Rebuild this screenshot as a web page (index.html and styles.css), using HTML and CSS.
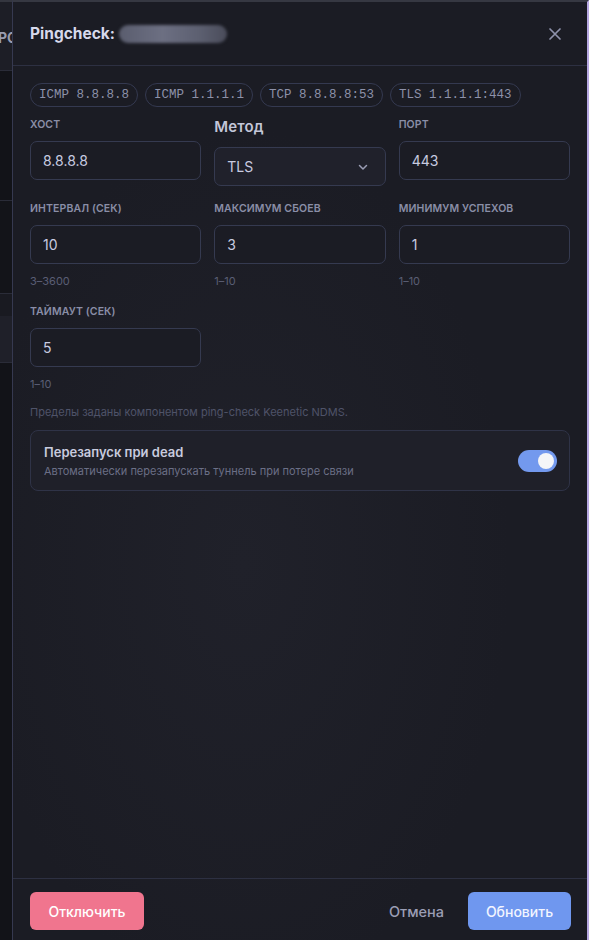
FILE: index.html
```html
<!DOCTYPE html>
<html lang="ru">
<head>
    <meta charset="UTF-8">
    <meta name="viewport" content="width=device-width, initial-scale=1.0">
    <title>Pingcheck</title>
    <link rel="stylesheet" href="styles.css">
</head>
<body>
    <div class="backdrop">
        <div class="bg-row bg-head"><span class="bg-text">PO</span></div>
        <div class="bg-row bg-dark"></div>
        <div class="bg-row bg-dark2"></div>
        <div class="bg-row bg-mid"></div>
        <div class="bg-row bg-light"></div>
        <div class="bg-row bg-rest"></div>
    </div>

    <div class="modal">
        <div class="modal-head">
            <h2 class="modal-title">Pingcheck: <span class="blurred"></span></h2>
            <button class="close" type="button" aria-label="Закрыть">
                <svg width="14" height="14" viewBox="0 0 14 14"><path d="M2 2L12 12M12 2L2 12" stroke="currentColor" stroke-width="1.7" stroke-linecap="round"/></svg>
            </button>
        </div>

        <div class="modal-body">
            <div class="presets">
                <span class="chip">ICMP 8.8.8.8</span>
                <span class="chip">ICMP 1.1.1.1</span>
                <span class="chip">TCP 8.8.8.8:53</span>
                <span class="chip">TLS 1.1.1.1:443</span>
            </div>

            <div class="fields">
                <div class="field">
                    <label class="label">Хост</label>
                    <div class="input">8.8.8.8</div>
                </div>
                <div class="field">
                    <label class="label label-big">Метод</label>
                    <div class="input select">
                        TLS
                        <svg width="12" height="12" viewBox="0 0 12 12"><path d="M2.5 4.5L6 8L9.5 4.5" fill="none" stroke="currentColor" stroke-width="1.5" stroke-linecap="round" stroke-linejoin="round"/></svg>
                    </div>
                </div>
                <div class="field">
                    <label class="label">Порт</label>
                    <div class="input">443</div>
                </div>

                <div class="field">
                    <label class="label">Интервал (сек)</label>
                    <div class="input">10</div>
                    <div class="hint">3–3600</div>
                </div>
                <div class="field">
                    <label class="label">Максимум сбоев</label>
                    <div class="input">3</div>
                    <div class="hint">1–10</div>
                </div>
                <div class="field">
                    <label class="label">Минимум успехов</label>
                    <div class="input">1</div>
                    <div class="hint">1–10</div>
                </div>

                <div class="field">
                    <label class="label">Таймаут (сек)</label>
                    <div class="input">5</div>
                    <div class="hint">1–10</div>
                </div>
            </div>

            <p class="note">Пределы заданы компонентом ping-check Keenetic NDMS.</p>

            <div class="toggle-card">
                <div>
                    <div class="toggle-title">Перезапуск при dead</div>
                    <div class="toggle-sub">Автоматически перезапускать туннель при потере связи</div>
                </div>
                <span class="switch on"><span class="knob"></span></span>
            </div>
        </div>

        <div class="modal-foot">
            <button class="btn btn-danger" type="button">Отключить</button>
            <div class="foot-right">
                <button class="btn btn-ghost" type="button">Отмена</button>
                <button class="btn btn-primary" type="button">Обновить</button>
            </div>
        </div>
    </div>
</body>
</html>
```

FILE: styles.css
```css
* {
    box-sizing: border-box;
}

body {
    margin: 0;
    height: 940px;
    overflow: hidden;
    display: flex;
    background: #111217;
    font-family: Inter, "Noto Sans", sans-serif;
    color: #c9cbdc;
}

/* page behind the modal */
.backdrop {
    width: 12px;
    display: flex;
    flex-direction: column;
    overflow: hidden;
}

.bg-row {
    border-bottom: 1px solid #2a2c38;
}

.bg-head {
    height: 71px;
    background: #1d1e26;
    padding-top: 27px;
    border-top: 2px solid #34363f;
    overflow: hidden;
}

.bg-text {
    display: block;
    margin-left: -2px;
    font-size: 14px;
    font-weight: 700;
    color: #9a9db0;
    white-space: nowrap;
}

.bg-dark {
    height: 130px;
    background: #121318;
}

.bg-dark2 {
    height: 93px;
    background: #131419;
}

.bg-mid {
    height: 22px;
    background: #191a21;
    border-bottom: none;
}

.bg-light {
    height: 47px;
    background: #1f2029;
}

.bg-rest {
    flex: 1;
    background: #121318;
    border-bottom: none;
}

/* modal */
.modal {
    flex: 1;
    display: flex;
    flex-direction: column;
    background: radial-gradient(ellipse at 40% 60%, #20212a 0%, #1b1c24 55%);
    border-left: 1px solid #363950;
    border-right: 2px solid #b7a8e2;
    border-top: 2px solid #363842;
}

.modal-head {
    height: 64px;
    display: flex;
    align-items: center;
    justify-content: space-between;
    padding: 0 25px 0 17px;
    border-bottom: 1px solid #2d3042;
}

.modal-title {
    margin: 0;
    font-size: 15.5px;
    font-weight: 700;
    color: #d7d9ec;
    display: flex;
    align-items: center;
    gap: 4px;
}

.blurred {
    display: inline-block;
    width: 108px;
    height: 18px;
    border-radius: 9px;
    background: linear-gradient(90deg, #5a5d6e, #6c6f82 40%, #5c5f70 75%, #4a4c5a);
    filter: blur(1.5px);
}

.close {
    background: none;
    border: none;
    padding: 0;
    color: #8d91ab;
    display: flex;
}

.modal-body {
    flex: 1;
    padding: 17px 17px 0 17px;
}

.presets {
    display: flex;
    gap: 7px;
    margin-bottom: 10px;
}

.chip {
    height: 24px;
    display: inline-flex;
    align-items: center;
    padding: 0 8px;
    border: 1px solid #343950;
    border-radius: 12px;
    font-family: "Liberation Mono", "DejaVu Sans Mono", monospace;
    font-size: 12.5px;
    color: #8d91a9;
}

.fields {
    display: grid;
    grid-template-columns: 1fr 1fr 1fr;
    column-gap: 13px;
    row-gap: 15px;
}

.label {
    display: block;
    font-size: 10.5px;
    line-height: 15px;
    font-weight: 600;
    text-transform: uppercase;
    letter-spacing: 0.01em;
    color: #8a8ea7;
    margin-bottom: 9px;
}

.label-big {
    font-size: 15px;
    line-height: 20px;
    text-transform: none;
    color: #c3c6d9;
    margin-bottom: 10px;
}

.input {
    height: 39px;
    display: flex;
    align-items: center;
    padding: 0 12px;
    border: 1px solid #353a50;
    border-radius: 7px;
    font-size: 14px;
    color: #c8cbe0;
    background: #1b1c24;
}

.select {
    justify-content: space-between;
    background: #20212b;
    padding-right: 16px;
}

.select svg {
    color: #9a9db4;
}

.hint {
    margin-top: 9px;
    font-size: 11px;
    line-height: 16px;
    color: #5a5e74;
}

.note {
    margin: 12px 0 10px;
    font-size: 11px;
    line-height: 16px;
    color: #4f5369;
}

.toggle-card {
    height: 61px;
    display: flex;
    align-items: center;
    justify-content: space-between;
    padding: 0 12px 0 13px;
    border: 1px solid #2f3347;
    border-radius: 8px;
    background: #1f2029;
}

.toggle-title {
    font-size: 13px;
    font-weight: 600;
    line-height: 18px;
    color: #c8cbde;
}

.toggle-sub {
    margin-top: 3px;
    font-size: 11px;
    line-height: 15px;
    color: #6b6f86;
}

.switch {
    width: 39px;
    height: 22px;
    border-radius: 11px;
    background: #7399ee;
    display: flex;
    align-items: center;
    justify-content: flex-end;
    padding: 0 3px;
}

.knob {
    width: 16px;
    height: 16px;
    border-radius: 50%;
    background: #f4f5f8;
}

.modal-foot {
    display: flex;
    justify-content: space-between;
    align-items: flex-start;
    padding: 13px 16px 10px 17px;
    border-top: 1px solid #2d3042;
}

.foot-right {
    display: flex;
}

.btn {
    height: 38px;
    border: none;
    border-radius: 6px;
    font-family: Inter, "Noto Sans", sans-serif;
    font-size: 14px;
    font-weight: 500;
    cursor: pointer;
}

.btn-danger {
    width: 114px;
    background: #f0758e;
    color: #fff;
}

.btn-ghost {
    background: none;
    color: #9b9eb5;
    padding: 0 24px 0 0;
    font-size: 14.5px;
}

.btn-primary {
    width: 103px;
    background: #6f97ef;
    color: #f2f5ff;
}
```
